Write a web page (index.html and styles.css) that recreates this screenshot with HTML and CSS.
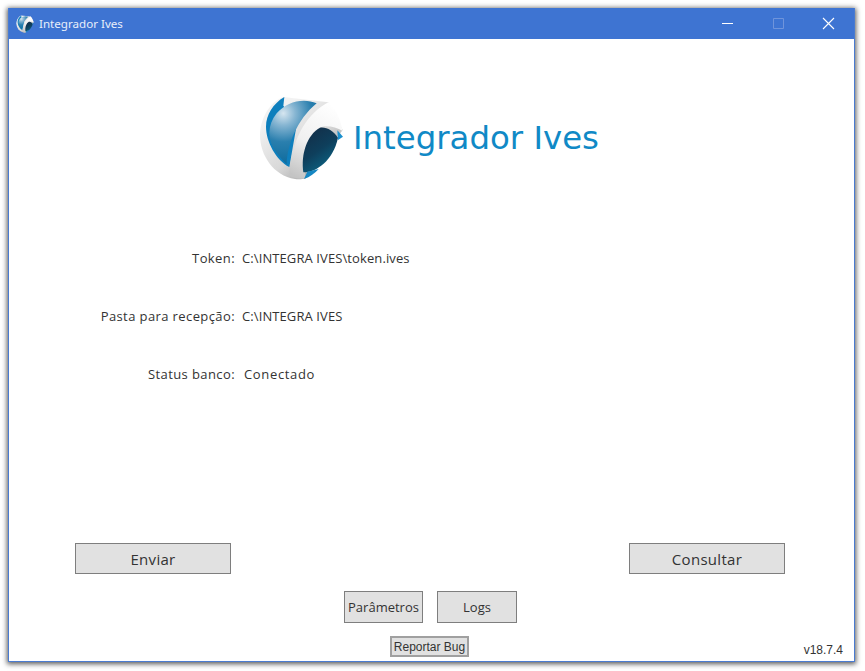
FILE: index.html
```html
<!DOCTYPE html>
<html lang="en">

<head>
    <meta charset="UTF-8">
    <title>Integrador Ives</title>
    <link rel="stylesheet" href="styles.css">
</head>

<body>
    <div class="window">
        <div class="titlebar">
            <svg class="app-icon" viewBox="25 30 258 258">
                <use href="#ives-mark"></use>
            </svg>
            <span class="app-title">Integrador Ives</span>
            <div class="win-buttons">
                <svg class="win-btn" viewBox="0 0 50 30"><path d="M18 14.5h11" stroke="#fff" fill="none"/></svg>
                <svg class="win-btn" viewBox="0 0 50 30"><path d="M19.5 9.5h10v10h-10z" stroke="#6f94db" fill="none"/></svg>
                <svg class="win-btn" viewBox="0 0 50 30"><path d="M19 9l11 11M30 9l-11 11" stroke="#fff" stroke-width="1.1" fill="none"/></svg>
            </div>
        </div>

        <div class="logo">
            <svg class="logo-mark" viewBox="0 0 360 315">
                <defs>
                    <radialGradient id="ballGrad" gradientUnits="userSpaceOnUse" cx="100" cy="85" r="165">
                        <stop offset="0" stop-color="#d6e6f0"/>
                        <stop offset="0.22" stop-color="#86b5d2"/>
                        <stop offset="0.52" stop-color="#2a7fae"/>
                        <stop offset="1" stop-color="#0a689a"/>
                    </radialGradient>
                    <linearGradient id="ringGrad" gradientUnits="userSpaceOnUse" x1="40" y1="120" x2="180" y2="285">
                        <stop offset="0" stop-color="#f2f2f2"/>
                        <stop offset="0.6" stop-color="#d8d8d8"/>
                        <stop offset="1" stop-color="#a8a8a8"/>
                    </linearGradient>
                    <linearGradient id="archGrad" gradientUnits="userSpaceOnUse" x1="240" y1="55" x2="130" y2="270">
                        <stop offset="0" stop-color="#ffffff"/>
                        <stop offset="0.55" stop-color="#f0f0f0"/>
                        <stop offset="1" stop-color="#c4c4c4"/>
                    </linearGradient>
                    <linearGradient id="darkGrad" gradientUnits="userSpaceOnUse" x1="180" y1="140" x2="250" y2="240">
                        <stop offset="0" stop-color="#12304a"/>
                        <stop offset="0.5" stop-color="#0e3f5c"/>
                        <stop offset="1" stop-color="#0c6484"/>
                    </linearGradient>
                    <symbol id="ives-mark" viewBox="0 0 360 315" width="360" height="315">
                        <path d="M100 36 C62 50 32 95 30 150 C30 210 70 272 135 282 C148 284 160 282 170 278 L278 135 L235 52 Z" fill="url(#ringGrad)"/>
                        <path d="M103 36 C70 55 48 90 48 125 C48 170 78 225 118 246 L140 120 L100 62 Z" fill="#0e7fbd"/>
                        <path d="M200 55 C160 38 110 50 80 85 C52 120 50 165 78 200 C88 215 100 228 110 238 C112 180 140 105 200 55 Z" fill="url(#ballGrad)"/>
                        <path d="M235 52 C180 80 125 150 118 270 C130 280 150 284 168 280 C154 220 165 160 205 130 C225 118 255 125 278 138 C272 105 258 72 235 52 Z" fill="url(#archGrad)"/>
                        <path d="M210 128 C170 150 152 210 160 262 C200 262 250 225 264 158 C250 138 230 125 210 128 Z" fill="url(#darkGrad)"/>
                        <path d="M262 136 L279 155 L264 165 Z" fill="#1a8fcd"/>
                        <path d="M162 282 L172 260 L206 252 C195 265 180 276 162 282 Z" fill="#1586c2"/>
                    </symbol>
                </defs>
                <use href="#ives-mark"></use>
            </svg>
            <span class="logo-text">Integrador Ives</span>
        </div>

        <div class="info">
            <div class="info-row">
                <span class="info-label">Token:</span>
                <span class="info-value">C:\INTEGRA IVES\token.ives</span>
            </div>
            <div class="info-row">
                <span class="info-label">Pasta para recepção:</span>
                <span class="info-value">C:\INTEGRA IVES</span>
            </div>
            <div class="info-row">
                <span class="info-label">Status banco:</span>
                <span class="info-value status">Conectado</span>
            </div>
        </div>

        <div class="actions">
            <button class="btn btn-main">Enviar</button>
            <button class="btn btn-main">Consultar</button>
        </div>

        <div class="tools">
            <button class="btn btn-params">Parâmetros</button>
            <button class="btn btn-logs">Logs</button>
        </div>

        <div class="footer">
            <button class="btn btn-bug">Reportar Bug</button>
            <span class="version">v18.7.4</span>
        </div>
    </div>
</body>

</html>
```

FILE: styles.css
```css
* {
    box-sizing: border-box;
}

html,
body {
    margin: 0;
    height: 100%;
}

body {
    background-color: #fff;
    padding: 8px 10px 9px 8px;
    overflow: hidden;
    font-family: "Open Sans", sans-serif;
    color: #333;
}

.window {
    height: 654px;
    display: flex;
    flex-direction: column;
    background-color: #fff;
    border: 1px solid #4a7bd0;
    border-top: none;
    box-shadow: 0 1px 5px 1px rgba(0, 0, 0, 0.65);
}

.titlebar {
    height: 31px;
    flex: none;
    display: flex;
    align-items: center;
    background-color: #3e74d2;
    color: #e8eefa;
    padding-left: 7px;
}

.app-icon {
    width: 18px;
    height: 18px;
}

.app-title {
    margin-left: 5px;
    font-family: "Noto Sans", sans-serif;
    font-size: 11.6px;
}

.win-buttons {
    margin-left: auto;
    display: flex;
}

.win-btn {
    width: 50px;
    height: 30px;
}

.logo {
    height: 105px;
    margin-top: 46px;
    flex: none;
    display: flex;
    align-items: center;
    padding-left: 241px;
}

.logo-mark {
    width: 120px;
    height: 105px;
}

.logo-text {
    margin-left: -17px;
    font-family: "DejaVu Sans", sans-serif;
    font-size: 32.4px;
    color: #1089c6;
}

.info {
    margin-top: 58px;
    flex: none;
    display: flex;
    flex-direction: column;
    gap: 38px;
}

.info-row {
    height: 20px;
    display: flex;
    align-items: center;
    font-size: 13px;
}

.info-label {
    width: 226px;
    text-align: right;
    letter-spacing: 0.4px;
}

.info-value {
    margin-left: 7px;
    letter-spacing: 0.1px;
}

.status {
    margin-left: 9px;
    letter-spacing: 0.65px;
}

.actions {
    margin-top: 159px;
    flex: none;
    display: flex;
    justify-content: space-between;
    padding: 0 69px 0 66px;
}

.btn {
    background-color: #e1e1e1;
    border: 1px solid #7e7e7e;
    border-radius: 0;
    padding: 0;
    font-family: "Open Sans", sans-serif;
    color: #333;
}

.btn-main {
    width: 156px;
    height: 31px;
    font-size: 15px;
    letter-spacing: 0.3px;
}

.tools {
    margin-top: 17px;
    flex: none;
    display: flex;
    gap: 14px;
    padding-left: 335px;
}

.btn-params {
    width: 79px;
    height: 32px;
    font-size: 13px;
}

.btn-logs {
    width: 80px;
    height: 32px;
    font-size: 13px;
}

.footer {
    margin-top: 13px;
    flex: none;
    display: flex;
    align-items: flex-end;
    padding-left: 381px;
}

.btn-bug {
    width: 79px;
    height: 21px;
    font-size: 12px;
    font-family: "Liberation Sans", sans-serif;
    border-width: 2px;
    border-color: #a0a0a0;
}

.version {
    margin-left: auto;
    margin-right: 11px;
    font-family: "Liberation Sans", sans-serif;
    font-size: 12px;
}
```
